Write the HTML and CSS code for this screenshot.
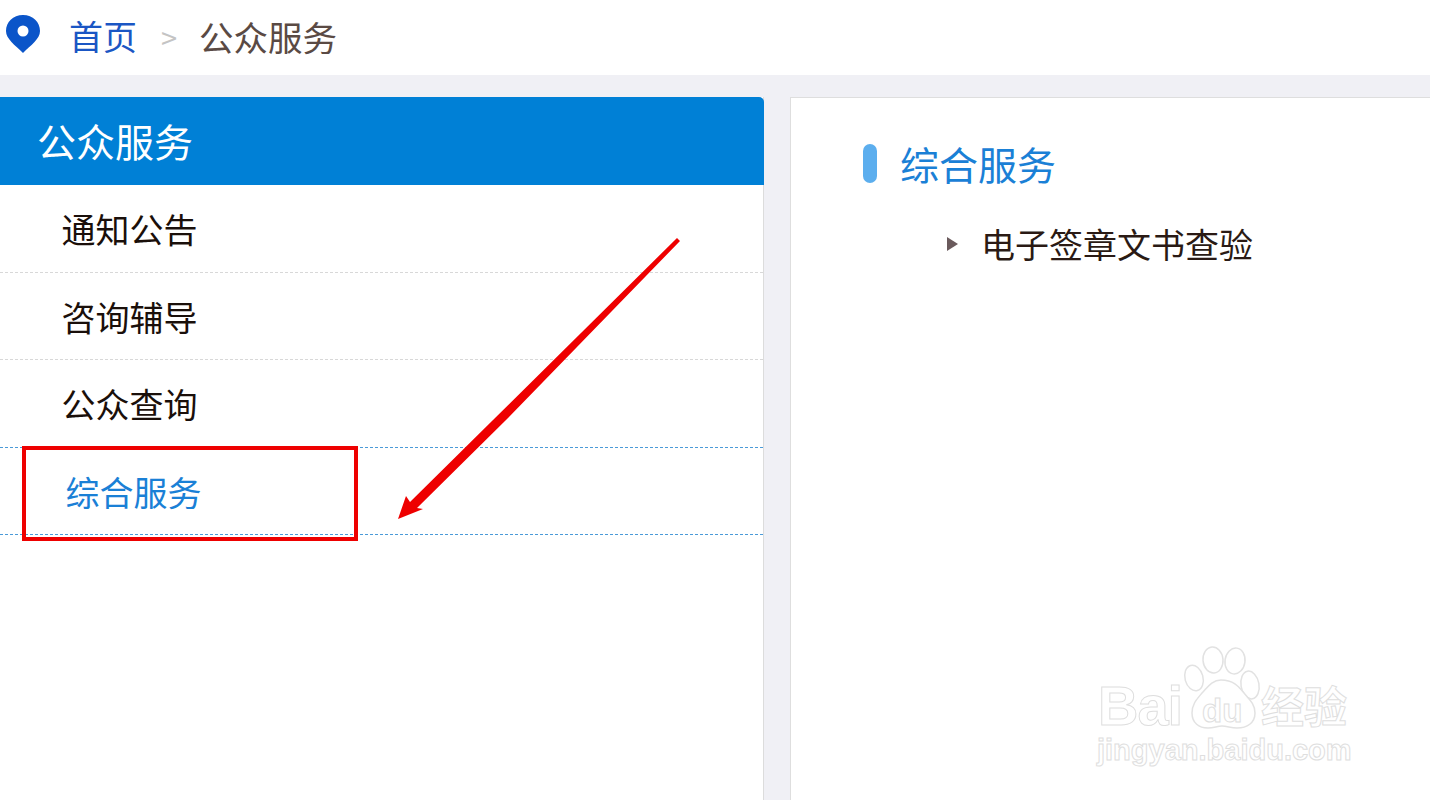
FILE: index.html
```html
<!DOCTYPE html>
<html lang="zh-CN">
<head>
    <meta charset="UTF-8">
    <title>公众服务</title>
    <link rel="stylesheet" href="styles.css">
</head>
<body>

<!-- 面包屑 -->
<div class="topbar">
    <svg class="pin" width="36" height="40" viewBox="0 0 36 40">
        <path fill="#0b55c9" d="M18 1C8 1 1 8 1 17c0 8 9 14 17 22 8-8 17-14 17-22C35 8 28 1 18 1z"/>
        <circle cx="18" cy="17" r="5.500" fill="#fff"/>
    </svg>
    <a class="crumb-home">首页</a>
    <span class="crumb-sep">&gt;</span>
    <span class="crumb-now">公众服务</span>
</div>

<div class="main">
    <!-- 左侧菜单 -->
    <div class="sidebar">
        <div class="side-title">公众服务</div>
        <div class="side-item">通知公告</div>
        <div class="side-item">咨询辅导</div>
        <div class="side-item">公众查询</div>
        <div class="side-item active">综合服务</div>
    </div>

    <!-- 右侧内容 -->
    <div class="panel">
        <div class="panel-head">
            <span class="panel-mark"></span>
            <span class="panel-title">综合服务</span>
        </div>
        <div class="panel-row">
            <span class="tri"></span>
            <span>电子签章文书查验</span>
        </div>
    </div>
</div>

<!-- 截图标注 -->
<div class="mark-box"></div>
<svg class="mark-arrow" width="1430" height="800" viewBox="0 0 1430 800">
    <path fill="#ee0000" d="M677 238 L680 241 L506 420 L417 508 L423 509 L398 519 L406 496 L410 502 L493 420 Z"/>
</svg>

<!-- 水印 -->
<div class="wm">
    <svg class="wm-paw" width="290" height="150" viewBox="0 0 290 150">
        <g fill="#fff" stroke="#e2e2e2" stroke-width="1.500">
            <ellipse cx="114" cy="48" rx="9" ry="13" transform="rotate(-15 114 48)"/>
            <ellipse cx="133" cy="30" rx="10" ry="13" transform="rotate(-5 133 30)"/>
            <ellipse cx="155" cy="31" rx="10" ry="13" transform="rotate(8 155 31)"/>
            <ellipse cx="170" cy="55" rx="9" ry="14" transform="rotate(-10 170 55)"/>
            <path d="M141 50c-9 0-14 8-19 13-5 6-10 11-10 20 0 10 7 15 16 15 6 0 9-2 14-2s9 2 15 2c10 0 18-5 18-15 0-9-6-14-11-20-5-6-10-13-23-13z"/>
        </g>
    </svg>
    <span class="wm-bai">Bai</span>
    <span class="wm-du">du</span>
    <span class="wm-cn">经验</span>
    <span class="wm-url">jingyan.baidu.com</span>
</div>

</body>
</html>
```

FILE: styles.css
```css
body {
    margin: 0;
    height: 800px;
    overflow: hidden;
    position: relative;
    background-color: #f0f0f5;
    font-family: "Noto Sans CJK SC", "Liberation Sans", sans-serif;
}
.topbar {
    height: 75px;
    box-sizing: border-box;
    padding: 0 0 4px 5px;
    background-color: #fff;
    display: flex;
    align-items: center;
}
.pin {
    margin-bottom: 3px;
}
.crumb-home {
    margin-left: 28px;
    font-size: 34px;
    color: #1a56c4;
}
.crumb-sep {
    margin-left: 24px;
    font-size: 29px;
    color: #c4c4c4;
}
.crumb-now {
    margin-left: 22px;
    font-size: 34.500px;
    color: #5a4a44;
}
.main {
    display: flex;
    gap: 26px;
    margin-top: 22px;
    height: 703px;
}
.sidebar {
    width: 764px;
    box-sizing: border-box;
    background-color: #fff;
    border-right: 1px solid #dcdcdc;
}
.side-title {
    height: 88px;
    line-height: 86px;
    margin-right: -1px;
    padding-left: 37px;
    font-size: 39px;
    color: #fff;
    background-color: #0080d6;
    border-top-right-radius: 5px;
}
.side-item {
    height: 86.500px;
    line-height: 87px;
    padding-left: 61.500px;
    font-size: 34px;
    color: #1a0f0a;
    border-bottom: 1px dashed #d8d8d8;
}
.side-item:nth-child(4) {
    border-bottom-color: #4a9ad8;
}
.side-item.active {
    padding-left: 65.500px;
    color: #1a80d6;
    border-bottom-color: #4a9ad8;
}
.panel {
    flex: 1;
    background-color: #fff;
    border: 1px solid #dedede;
    border-right: none;
    border-bottom: none;
}
.panel-head {
    display: flex;
    align-items: center;
    margin: 43px 0 0 72px;
    height: 44px;
}
.panel-mark {
    width: 14px;
    height: 39px;
    border-radius: 7px;
    background-color: #5caeee;
}
.panel-title {
    margin-left: 23px;
    font-size: 39px;
    color: #1a80d6;
}
.panel-row {
    display: flex;
    align-items: center;
    margin: 34px 0 0 156px;
    font-size: 34px;
    color: #2a1a14;
}
.tri {
    width: 0;
    height: 0;
    margin-right: 23px;
    border-left: 11px solid #6a5a5c;
    border-top: 7px solid transparent;
    border-bottom: 7px solid transparent;
}
.mark-box {
    position: absolute;
    left: 22px;
    top: 446px;
    width: 328px;
    height: 87px;
    border: 4px solid #ee0000;
}
.mark-arrow {
    position: absolute;
    left: 0;
    top: 0;
}
.wm {
    position: absolute;
    left: 1080px;
    top: 630px;
    width: 290px;
    height: 150px;
    color: #fff;
    font-family: "Liberation Sans", sans-serif;
    font-weight: 700;
    -webkit-text-stroke: 1px #dedede;
}
.wm-paw {
    position: absolute;
    left: 0;
    top: 0;
}
.wm-bai {
    position: absolute;
    left: 18px;
    top: 43px;
    font-size: 56px;
    line-height: 66px;
    letter-spacing: -1px;
}
.wm-du {
    position: absolute;
    left: 122px;
    top: 61px;
    font-size: 33px;
    line-height: 40px;
}
.wm-cn {
    position: absolute;
    left: 181px;
    top: 46px;
    font-family: "Noto Sans CJK SC", sans-serif;
    font-size: 43px;
    line-height: 56px;
}
.wm-url {
    position: absolute;
    left: 17px;
    top: 102px;
    font-size: 29px;
    line-height: 36px;
}
```
